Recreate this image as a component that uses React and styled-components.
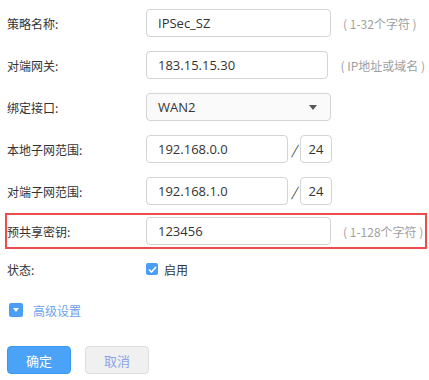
import styled, { createGlobalStyle } from "styled-components";

const GlobalStyle = createGlobalStyle`
  body {
    margin: 0;
    background: #fff;
    font-family: "Noto Sans CJK SC", "Liberation Sans", sans-serif;
    color: #333;
  }
`;

const Form = styled.div`
  padding: 5px 0 0 5px;
`;

const Row = styled.div`
  display: flex;
  align-items: center;
  box-sizing: border-box;
  width: 422px;
  height: 36px;
  padding: 2px 0;
  margin-bottom: 6px;
  border: 2px solid ${(p) => (p.$highlight ? "#ee4b4b" : "transparent")};
  margin-top: ${(p) => (p.$highlight ? "-2px" : "0")};
`;

const Label = styled.label`
  width: 139px;
  flex: none;
  font-size: 12px;
  color: #333;
`;

const Input = styled.div`
  box-sizing: border-box;
  width: ${(p) => p.$w || 185}px;
  height: 28px;
  border: 1px solid #d4d4d4;
  border-radius: 4px;
  background: ${(p) => (p.$select ? "#fafafa" : "#fff")};
  padding: 0 ${(p) => (p.$center ? 0 : 11)}px;
  display: flex;
  align-items: center;
  justify-content: ${(p) => (p.$center ? "center" : "space-between")};
  font-family: "Open Sans", "Noto Sans CJK SC", sans-serif;
  font-size: 13px;
  color: #333;
`;

const Arrow = styled.span`
  width: 0;
  height: 0;
  border-left: 4px solid transparent;
  border-right: 4px solid transparent;
  border-top: 5px solid #555;
  margin-right: 2px;
`;

const Hint = styled.span`
  margin-left: 12px;
  font-size: 12px;
  color: #a0a0a0;
  white-space: pre;
`;

const Slash = styled.span`
  width: 12px;
  text-align: center;
  font-size: 13px;
  font-style: italic;
  color: #333;
`;

const Line = styled.div`
  display: flex;
  align-items: center;
  height: 20px;
  padding-left: 2px;
  margin-top: ${(p) => p.$mt}px;
`;

const Check = styled.span`
  width: 12px;
  height: 12px;
  border-radius: 2px;
  background: #4a9ff5;
  display: flex;
  align-items: center;
  justify-content: center;
  margin-right: 6px;
`;

const CheckText = styled.span`
  font-size: 12px;
  color: #333;
`;

const Toggle = styled.span`
  width: 14px;
  height: 14px;
  margin-left: 2px;
  border-radius: 2px;
  background: #4a9ff5;
  display: flex;
  align-items: center;
  justify-content: center;
  &::after {
    content: "";
    border-left: 3px solid transparent;
    border-right: 3px solid transparent;
    border-top: 4px solid #fff;
  }
`;

const LinkText = styled.span`
  margin-left: 10px;
  font-size: 12px;
  color: #6d9ff0;
`;

const Buttons = styled.div`
  display: flex;
  gap: 14px;
  padding-left: 2px;
  margin-top: 26px;
`;

const Button = styled.button`
  box-sizing: border-box;
  width: 64px;
  height: 28px;
  border-radius: 4px;
  border: 1px solid ${(p) => (p.$primary ? "#3f97ec" : "#dcdcdc")};
  background: ${(p) => (p.$primary ? "#4aa3f7" : "#f0f0f0")};
  color: ${(p) => (p.$primary ? "#fff" : "#8aa4e6")};
  font-family: "Noto Sans CJK SC", sans-serif;
  font-size: 13px;
  padding: 0;
`;

export default function App() {
  return (
    <>
      <GlobalStyle />
      <Form>
        <Row>
          <Label>策略名称:</Label>
          <Input>IPSec_SZ</Input>
          <Hint>( 1-32个字符 )</Hint>
        </Row>
        <Row>
          <Label>对端网关:</Label>
          <Input>183.15.15.30</Input>
          <Hint>( IP地址或域名 )</Hint>
        </Row>
        <Row>
          <Label>绑定接口:</Label>
          <Input $select>
            WAN2
            <Arrow />
          </Input>
        </Row>
        <Row>
          <Label>本地子网范围:</Label>
          <Input $w={142}>192.168.0.0</Input>
          <Slash>/</Slash>
          <Input $w={32} $center>24</Input>
        </Row>
        <Row>
          <Label>对端子网范围:</Label>
          <Input $w={142}>192.168.1.0</Input>
          <Slash>/</Slash>
          <Input $w={32} $center>24</Input>
        </Row>
        <Row $highlight>
          <Label>预共享密钥:</Label>
          <Input>123456</Input>
          <Hint>( 1-128个字符 )</Hint>
        </Row>
        <Line $mt={10}>
          <Label>状态:</Label>
          <Check>
            <svg width="9" height="7" viewBox="0 0 9 7">
              <path d="M1 3.5 L3.5 6 L8 1" fill="none" stroke="#fff" strokeWidth="1.6" />
            </svg>
          </Check>
          <CheckText>启用</CheckText>
        </Line>
        <Line $mt={21}>
          <Toggle />
          <LinkText>高级设置</LinkText>
        </Line>
        <Buttons>
          <Button $primary>确定</Button>
          <Button>取消</Button>
        </Buttons>
      </Form>
    </>
  );
}
